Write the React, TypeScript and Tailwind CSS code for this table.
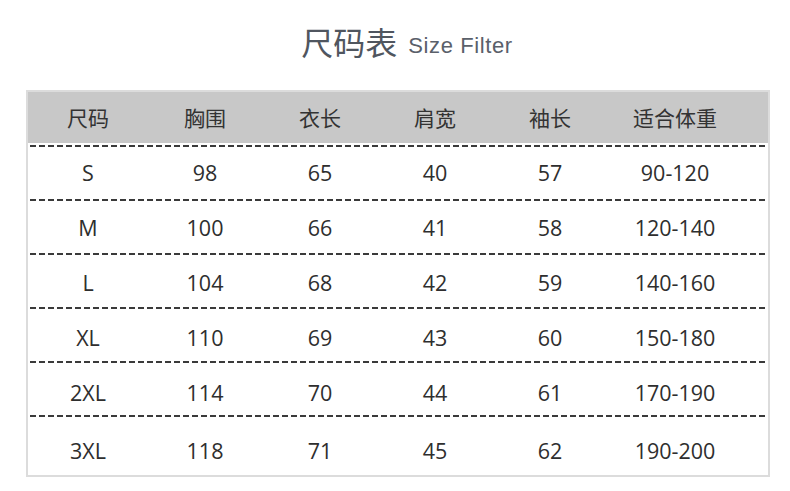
import React from "react";

const headers = ["尺码", "胸围", "衣长", "肩宽", "袖长", "适合体重"];
const rows = [
  ["S", "98", "65", "40", "57", "90-120"],
  ["M", "100", "66", "41", "58", "120-140"],
  ["L", "104", "68", "42", "59", "140-160"],
  ["XL", "110", "69", "43", "60", "150-180"],
  ["2XL", "114", "70", "44", "61", "170-190"],
  ["3XL", "118", "71", "45", "62", "190-200"],
];

const rowPad = ["pt-[3px]", "pt-[5px]", "pt-[6px]", "pt-[8px]", "pt-[10px]", "pt-[11px]"];

const cols = "grid grid-cols-[120px_114px_116px_114px_116px_134px_1fr]";

function Dash() {
  return (
    <div className="h-[2px] mx-[2px] bg-[repeating-linear-gradient(to_right,#3a3a3a_0px,#3a3a3a_6px,transparent_6px,transparent_9px)]" />
  );
}

export default function App() {
  return (
    <div
      className="w-[790px] h-[491px] bg-white relative"
      style={{ fontFamily: '"Open Sans", "Noto Sans CJK SC", sans-serif' }}
    >
      <div className="h-[90px] flex items-start justify-center pt-[20px] pl-[24px]">
        <span
          className="text-[32px] leading-[42px] text-[#50565f]"
          style={{ fontFamily: '"Noto Sans CJK SC", sans-serif' }}
        >
          尺码表
        </span>
        <span
          className="ml-[11px] text-[22px] tracking-[0.6px] leading-[42px] pt-[5px] text-[#5a606a]"
          style={{ fontFamily: '"Liberation Sans", Arial, sans-serif' }}
        >
          Size Filter
        </span>
      </div>
      <div className="mx-[26px] w-[744px] border-[2px] border-[#dcdcdc]">
        <div className={`${cols} h-[51px] bg-[#c8c8c8] items-center`}>
          {headers.map((h) => (
            <div
              key={h}
              className="text-center text-[21px] text-[#333]"
              style={{ fontFamily: '"Noto Sans CJK SC", sans-serif' }}
            >
              {h}
            </div>
          ))}
        </div>
        {rows.map((r, i) => (
          <div key={i}>
            <div className="h-[2px] bg-white" />
            <Dash />
            <div
              className={`${cols} ${i === rows.length - 1 ? "h-[58px]" : "h-[50px]"} items-center`}
            >
              {r.map((c, j) => (
                <div key={j} className={`text-center text-[21.5px] text-[#2e2e2e] ${rowPad[i]}`}>
                  {c}
                </div>
              ))}
            </div>
          </div>
        ))}
      </div>
    </div>
  );
}
